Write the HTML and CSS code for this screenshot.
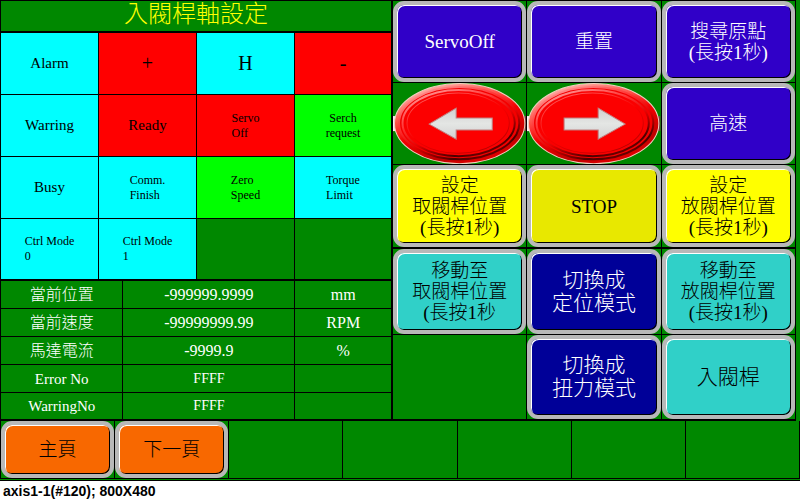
FILE: index.html
```html
<!DOCTYPE html>
<html lang="zh-Hant">
<head>
<meta charset="utf-8">
<title>入閥桿軸設定</title>
<link rel="stylesheet" href="styles.css">
</head>
<body>
<svg class="defs" aria-hidden="true">
  <defs>
    <linearGradient id="rim" x1="0.25" y1="0" x2="0.75" y2="1">
      <stop offset="0" stop-color="#ffb8b0"/>
      <stop offset="0.3" stop-color="#ff5048"/>
      <stop offset="0.5" stop-color="#f40000"/>
      <stop offset="0.8" stop-color="#c00000"/>
      <stop offset="1" stop-color="#f00000"/>
    </linearGradient>
    <linearGradient id="ridge" x1="0.2" y1="0" x2="0.8" y2="1">
      <stop offset="0" stop-color="#ff9898"/>
      <stop offset="0.35" stop-color="#ff3030"/>
      <stop offset="0.6" stop-color="#e00000"/>
      <stop offset="0.85" stop-color="#480000"/>
      <stop offset="1" stop-color="#800000"/>
    </linearGradient>
    <linearGradient id="soft" x1="0.2" y1="0" x2="0.8" y2="1">
      <stop offset="0" stop-color="#ff6060"/>
      <stop offset="0.5" stop-color="#f80000"/>
      <stop offset="1" stop-color="#b00000"/>
    </linearGradient>
    <linearGradient id="side" x1="0" y1="0" x2="1" y2="0">
      <stop offset="0" stop-color="#fff0f0"/>
      <stop offset="0.5" stop-color="#ff6060"/>
      <stop offset="1" stop-color="#704040"/>
    </linearGradient>
    <linearGradient id="metal" x1="0" y1="0" x2="0" y2="1">
      <stop offset="0" stop-color="#d0d0d0"/>
      <stop offset="0.5" stop-color="#e4e6e4"/>
      <stop offset="1" stop-color="#d2d2d2"/>
    </linearGradient>
    <g id="oval">
      <rect x="0" y="33" width="133" height="15" fill="url(#side)"/>
      <ellipse cx="66.500" cy="40.500" rx="65" ry="40" fill="url(#rim)" stroke="#f0d0c0" stroke-width="1"/>
      <ellipse cx="66" cy="40" rx="60" ry="36" fill="#f40000" stroke="url(#ridge)" stroke-width="2"/>
      <ellipse cx="65.500" cy="40" rx="56" ry="33" fill="#fa0000" stroke="url(#ridge)" stroke-width="2"/>
      <ellipse cx="65" cy="40" rx="51" ry="30" fill="#fc0000" stroke="url(#soft)" stroke-width="1"/>
    </g>
  </defs>
</svg>
<main class="screen">
  <div class="panels">
    <section class="monitor">
      <h1 class="title">入閥桿軸設定</h1>
      <div class="lamps">
        <div class="lamp cyan">Alarm</div>
        <button class="lamp red jog">+</button>
        <button class="lamp cyan jog">H</button>
        <button class="lamp red jog">-</button>
        <div class="lamp cyan">Warring</div>
        <div class="lamp red">Ready</div>
        <div class="lamp red small">Servo<br>Off</div>
        <div class="lamp lime small centered">Serch<br>request</div>
        <div class="lamp cyan">Busy</div>
        <div class="lamp cyan small">Comm.<br>Finish</div>
        <div class="lamp lime small">Zero<br>Speed</div>
        <div class="lamp cyan small">Torque<br>Limit</div>
        <div class="lamp cyan small">Ctrl Mode<br>0</div>
        <div class="lamp cyan small">Ctrl Mode<br>1</div>
        <div class="lamp"></div>
        <div class="lamp"></div>
      </div>
      <table class="readings">
        <colgroup><col class="name"><col class="value"><col class="unit"></colgroup>
        <tbody>
          <tr><th scope="row">當前位置</th><td>-999999.9999</td><td>mm</td></tr>
          <tr><th scope="row">當前速度</th><td>-99999999.99</td><td>RPM</td></tr>
          <tr><th scope="row">馬達電流</th><td>-9999.9</td><td>%</td></tr>
          <tr><th scope="row" class="latin">Error No</th><td class="code">FFFF</td><td></td></tr>
          <tr><th scope="row" class="latin">WarringNo</th><td class="code">FFFF</td><td></td></tr>
        </tbody>
      </table>
    </section>
    <section class="controls">
      <div class="cell"><button class="key violet">ServoOff</button></div>
      <div class="cell"><button class="key violet">重置</button></div>
      <div class="cell"><button class="key violet">搜尋原點<br>(長按1秒)</button></div>
      <div class="cell"><button class="arrow" aria-label="←">
        <svg viewBox="0 0 133 81" preserveAspectRatio="none"><use href="#oval"/><path d="M36 41 L63 25 V35 H99 V47 H63 V56 Z" fill="url(#metal)" stroke="#c08080" stroke-width="1"/></svg>
      </button></div>
      <div class="cell"><button class="arrow" aria-label="→">
        <svg viewBox="0 0 133 81" preserveAspectRatio="none"><use href="#oval"/><path d="M98 41 L71 25 V35 H37 V47 H71 V56 Z" fill="url(#metal)" stroke="#c08080" stroke-width="1"/></svg>
      </button></div>
      <div class="cell"><button class="key violet">高速</button></div>
      <div class="cell ruled"><button class="key yellow">設定<br>取閥桿位置<br>(長按1秒)</button></div>
      <div class="cell ruled"><button class="key mustard">STOP</button></div>
      <div class="cell ruled"><button class="key yellow">設定<br>放閥桿位置<br>(長按1秒)</button></div>
      <div class="cell"><button class="key teal">移動至<br>取閥桿位置<br>(長按1秒</button></div>
      <div class="cell"><button class="key navy large">切換成<br>定位模式</button></div>
      <div class="cell"><button class="key teal">移動至<br>放閥桿位置<br>(長按1秒)</button></div>
      <div class="cell"></div>
      <div class="cell"><button class="key navy large">切換成<br>扭力模式</button></div>
      <div class="cell"><button class="key teal large">入閥桿</button></div>
    </section>
  </div>
  <nav class="pages">
    <div class="cell"><button class="key orange">主頁</button></div>
    <div class="cell"><button class="key orange">下一頁</button></div>
    <div class="cell"></div>
    <div class="cell"></div>
    <div class="cell"></div>
    <div class="cell"></div>
    <div class="cell"></div>
  </nav>
</main>
<footer class="caption">axis1-1(#120); 800X480</footer>
</body>
</html>
```
FILE: styles.css
```css
* { box-sizing: border-box; }

body {
  margin: 0;
  background: #fff;
  font-family: "Liberation Serif", "Noto Sans CJK TC", serif;
  font-weight: 300;
  color: #000;
}

button {
  margin: 0;
  padding: 0;
  border: 0;
  font: inherit;
  color: inherit;
  cursor: pointer;
}

.defs { position: absolute; width: 0; height: 0; }

.screen {
  background: #000;
  border-bottom: 1px solid #000;
}

.panels {
  display: grid;
  grid-template-columns: 393fr 407fr;
}

.monitor {
  display: flex;
  flex-direction: column;
  gap: 2px;
  padding: 1px 2px 0 1px;
}

.title {
  margin: 0;
  height: 30px;
  background: #008800;
  color: #ff0;
  font-size: 24px;
  font-weight: 300;
  line-height: 26px;
  text-align: center;
}

.lamps {
  display: grid;
  grid-template-columns: 97fr 97fr 97fr 96fr;
  grid-template-rows: 61px 61px 61px 60px;
  gap: 1px;
}

.lamp {
  display: flex;
  align-items: center;
  justify-content: center;
  background: #008800;
  font-size: 15px;
}

.jog { font-size: 20px; }
.small { font-size: 12px; line-height: 15px; }
.centered { text-align: center; }
.cyan { background: #0ff; }
.red { background: #f00; }
.lime { background: #0f0; }

.readings {
  width: 100%;
  table-layout: fixed;
  border-spacing: 0;
  color: #fff;
  font-size: 16px;
  line-height: 20px;
}

.name { width: 31.4%; }
.value { width: 44.1%; }
.unit { width: 24.5%; }

.readings th,
.readings td {
  height: 28px;
  padding: 0;
  background: #008800;
  border-right: 1px solid #000;
  border-bottom: 1px solid #000;
  font-weight: 300;
  text-align: center;
}

.readings td:last-child { border-right: 0; }
.readings tr:last-child > * { border-bottom-width: 2px; }
.readings .latin { font-size: 15px; }
.readings .code { font-size: 14px; }

.controls {
  display: grid;
  grid-template-columns: repeat(3, 1fr);
  grid-template-rows: 81px 81px 83px 85px 84px;
  gap: 1px;
  padding: 1px 1px 2px 0;
  border-right: 4px solid #008800;
}

.cell {
  display: grid;
  background: #008800;
}

.ruled { border-bottom: 1px solid #000; }

.key {
  border: 4px solid #b8b8b8;
  border-radius: 11px;
  box-shadow: inset 1px 1px 0 #fff, inset -1px -1px 0 #000;
  font-size: 19px;
  line-height: 21px;
}

.large { font-size: 21px; line-height: 23px; }
.violet { background: #3000c8; color: #fff; }
.yellow { background: #ff0; }
.mustard { background: #e8e800; }
.teal { background: #30d0c8; }
.navy { background: #000098; color: #fff; }
.orange { background: #f86800; }

.arrow { background: none; }
.arrow svg { display: block; width: 100%; height: 100%; }

.pages {
  display: grid;
  grid-template-columns: repeat(7, 1fr);
  grid-auto-rows: 57px;
  gap: 1px;
  padding: 0 1px 1px;
  border-bottom: 1px solid #008800;
}

.caption {
  padding: 2px 3px;
  font-family: "Liberation Sans", sans-serif;
  font-size: 14px;
  font-weight: 700;
  line-height: 16px;
}
```
